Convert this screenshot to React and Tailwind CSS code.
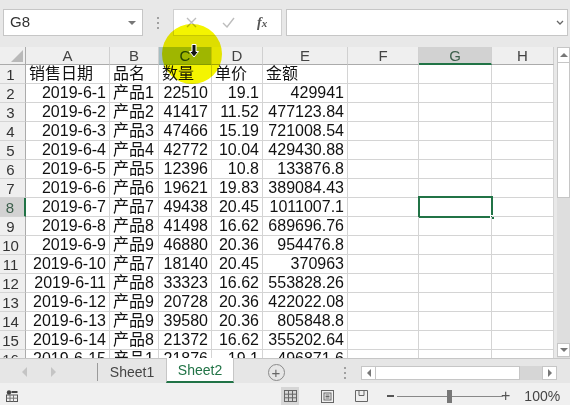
import React from 'react';

const FONT = { fontFamily: '"Liberation Sans", "Noto Sans CJK SC", sans-serif' };

// column widths in px, row header first
const cols = [
  { key: 'rh', w: 'w-[26px]' },
  { key: 'A', w: 'w-[84px]' },
  { key: 'B', w: 'w-[49px]' },
  { key: 'C', w: 'w-[53px]' },
  { key: 'D', w: 'w-[51px]' },
  { key: 'E', w: 'w-[85px]' },
  { key: 'F', w: 'w-[71px]' },
  { key: 'G', w: 'w-[73px]' },
  { key: 'H', w: 'w-[62px]' },
];

const rows = [
  ['销售日期', '品名', '数量', '单价', '金额'],
  ['2019-6-1', '产品1', '22510', '19.1', '429941'],
  ['2019-6-2', '产品2', '41417', '11.52', '477123.84'],
  ['2019-6-3', '产品3', '47466', '15.19', '721008.54'],
  ['2019-6-4', '产品4', '42772', '10.04', '429430.88'],
  ['2019-6-5', '产品5', '12396', '10.8', '133876.8'],
  ['2019-6-6', '产品6', '19621', '19.83', '389084.43'],
  ['2019-6-7', '产品7', '49438', '20.45', '1011007.1'],
  ['2019-6-8', '产品8', '41498', '16.62', '689696.76'],
  ['2019-6-9', '产品9', '46880', '20.36', '954476.8'],
  ['2019-6-10', '产品7', '18140', '20.45', '370963'],
  ['2019-6-11', '产品8', '33323', '16.62', '553828.26'],
  ['2019-6-12', '产品9', '20728', '20.36', '422022.08'],
  ['2019-6-13', '产品9', '39580', '20.36', '805848.8'],
  ['2019-6-14', '产品8', '21372', '16.62', '355202.64'],
  ['2019-6-15', '产品1', '21876', '19.1', '496871.6'],
];

const ColHeader = () => (
  <div className="flex h-[18px] shrink-0">
    {/* select-all corner */}
    <div className="w-[26px] h-full bg-[#efefef] border-r border-b border-[#ababab] relative">
      <div className="absolute right-[2px] bottom-[2px] w-0 h-0 border-l-[12px] border-l-transparent border-b-[12px] border-b-[#b9b9b9]" />
    </div>
    {cols.slice(1).map((c) => {
      let tone = 'bg-[#efefef] text-[#444] border-b border-[#ababab]';
      if (c.key === 'C') tone = 'bg-[#a6bec2] text-[#25466b] border-b border-[#8aa3a8]';
      if (c.key === 'G') tone = 'bg-[#d2d2d2] text-[#3d5f4c] border-b-2 border-b-[#217346]';
      return (
        <div
          key={c.key}
          className={`${c.w} h-full border-r border-r-[#d0d0d0] flex items-center justify-center text-[15px] leading-none ${tone}`}
        >
          {c.key}
        </div>
      );
    })}
  </div>
);

const DataRow = ({ n, data }) => {
  const head = n === 1;
  const selected = n === 8;
  return (
    <div className="flex h-[19px] shrink-0">
      <div
        className={`w-[26px] h-full flex items-center justify-center pr-[4px] text-[15px] leading-none border-b border-[#d4d4d4] ${
          selected ? 'bg-[#d2d2d2] text-[#3d5f4c] border-r-2 border-r-[#217346]' : 'bg-[#efefef] text-[#333] border-r border-r-[#ababab]'
        }`}
      >
        {n}
      </div>
      {cols.slice(1).map((c, i) => {
        const v = data[i] || '';
        const left = head || c.key === 'B';
        return (
          <div
            key={c.key}
            className={`${c.w} h-full relative border-r border-b border-[#d4d4d4] flex items-center px-[3px] text-[16px] leading-[18px] text-[#111] whitespace-nowrap ${
              left ? 'justify-start' : 'justify-end'
            }`}
          >
            {v}
            {selected && c.key === 'G' && (
              <div className="absolute -left-[1px] -top-[2px] w-[75px] h-[22px] border-2 border-[#217346]">
                <div className="absolute -right-[4px] -bottom-[4px] w-[5px] h-[5px] bg-[#217346] border border-white" />
              </div>
            )}
          </div>
        );
      })}
    </div>
  );
};

const VScroll = () => (
  <div className="w-[13px] h-full flex flex-col bg-[#dedede]">
    <div className="h-[16px] bg-white border border-[#c6c6c6] flex items-center justify-center">
      <div className="w-0 h-0 border-l-[4px] border-r-[4px] border-b-[4px] border-l-transparent border-r-transparent border-b-[#777]" />
    </div>
    <div className="h-[135px] bg-white border-x border-b border-[#c6c6c6]" />
    <div className="flex-1" />
    <div className="h-[14px] mb-[1px] bg-white border border-[#c6c6c6] flex items-center justify-center">
      <div className="w-0 h-0 border-l-[4px] border-r-[4px] border-t-[4px] border-l-transparent border-r-transparent border-t-[#777]" />
    </div>
  </div>
);

const Dots = ({ className }) => (
  <div className={`flex flex-col gap-[3px] ${className}`}>
    <div className="w-[2px] h-[2px] bg-[#a0a0a0]" />
    <div className="w-[2px] h-[2px] bg-[#a0a0a0]" />
    <div className="w-[2px] h-[2px] bg-[#a0a0a0]" />
  </div>
);

const TabBar = () => (
  <div className="h-[25px] shrink-0 flex items-stretch bg-[#e6e6e6] border-t border-[#c6c6c6] text-[14px]">
    <div className="w-[97px] flex items-center pt-[2px]">
      <div className="ml-[22px] w-0 h-0 border-t-[5px] border-b-[5px] border-r-[5px] border-t-transparent border-b-transparent border-r-[#c4c4c4]" />
      <div className="ml-[24px] w-0 h-0 border-t-[5px] border-b-[5px] border-l-[5px] border-t-transparent border-b-transparent border-l-[#c4c4c4]" />
    </div>
    <div className="w-px bg-[#9a9a9a] mt-[4px] mb-[2px]" />
    <div className="w-[68px] flex items-center justify-center text-[#444] pt-[2px]">Sheet1</div>
    <div className="w-[68px] -mt-px flex items-center justify-center bg-white text-[#217346] border-x border-[#c6c6c6] border-b-2 border-b-[#217346] pt-[2px]">
      Sheet2
    </div>
    <div className="w-[84px] flex items-center justify-center pt-[3px]">
      <div className="w-[17px] h-[17px] rounded-full border border-[#8a8a8a] flex items-center justify-center text-[#666] text-[15px] leading-none">
        +
      </div>
    </div>
    <div className="w-[43px] flex items-center pl-[26px] pt-[3px]">
      <Dots />
    </div>
    <div className="w-[196px] flex items-center pt-[3px]">
      <div className="h-[14px] w-full flex bg-[#d6d6d6]">
        <div className="w-[15px] bg-white border border-[#c6c6c6] flex items-center justify-center">
          <div className="w-0 h-0 border-t-[4px] border-b-[4px] border-r-[4px] border-t-transparent border-b-transparent border-r-[#777]" />
        </div>
        <div className="w-[144px] bg-white border-y border-r border-[#c6c6c6]" />
        <div className="flex-1" />
        <div className="w-[15px] bg-white border border-[#c6c6c6] flex items-center justify-center">
          <div className="w-0 h-0 border-t-[4px] border-b-[4px] border-l-[4px] border-t-transparent border-b-transparent border-l-[#777]" />
        </div>
      </div>
    </div>
  </div>
);

const StatusBar = () => (
  <div className="h-[22px] shrink-0 flex items-center pt-[4px] bg-[#f0f0f0] text-[#444]">
    <svg className="ml-[6px]" width="12" height="12" viewBox="0 0 12 12">
      <circle cx="3" cy="2.5" r="2.2" fill="#444" />
      <rect x="5.5" y="1" width="6" height="2" fill="#444" />
      <rect x="0.5" y="5" width="11" height="6.5" fill="none" stroke="#555" />
      <path d="M4 5v6.5M7.5 5v6.5M0.5 8.2h11" stroke="#777" />
    </svg>
    <div className="ml-[263px] w-[18px] h-[18px] bg-[#d6d6d6] flex items-center justify-center">
      <svg width="13" height="12" viewBox="0 0 13 12">
        <rect x="0.5" y="0.5" width="12" height="11" fill="none" stroke="#666" />
        <path d="M4.5 0.5v11M8.5 0.5v11M0.5 4.2h12M0.5 7.8h12" stroke="#666" />
      </svg>
    </div>
    <svg className="ml-[22px]" width="13" height="13" viewBox="0 0 13 13">
      <rect x="0.5" y="0.5" width="12" height="12" fill="none" stroke="#666" />
      <rect x="3" y="3" width="7" height="7" fill="none" stroke="#666" />
      <path d="M4.5 5h4M4.5 6.5h4M4.5 8h4" stroke="#666" />
    </svg>
    <svg className="ml-[21px]" width="13" height="12" viewBox="0 0 13 12">
      <path d="M0.5 0.5h12v11h-12zM4 0.5v5h5v-5" fill="none" stroke="#666" />
    </svg>
    <div className="ml-[19px] w-[7px] h-[2px] bg-[#555]" />
    <div className="ml-[3px] w-[106px] h-px bg-[#888] relative">
      <div className="absolute left-[50px] -top-[6px] w-[5px] h-[13px] bg-[#777]" />
    </div>
    <div className="text-[16px] leading-none text-[#555] -ml-[2px]">+</div>
    <div className="ml-[14px] text-[14px]" style={FONT}>100%</div>
  </div>
);

export default function App() {
  return (
    <div className="w-[570px] h-[405px] overflow-hidden relative flex flex-col bg-[#e8e8e8]" style={FONT}>
      {/* name box + formula bar */}
      <div className="h-[47px] shrink-0 flex items-start pt-[9px] pl-[3px]">
        <div className="w-[140px] h-[27px] bg-white border border-[#c6c6c6] flex items-center justify-between pl-[6px] pr-[6px] text-[15px] text-[#333]">
          <span>G8</span>
          <div className="w-0 h-0 border-l-[4px] border-r-[4px] border-t-[4px] border-l-transparent border-r-transparent border-t-[#777]" />
        </div>
        <div className="w-[30px] h-[27px] flex items-center justify-center">
          <Dots />
        </div>
        <div className="w-[109px] h-[27px] bg-white border border-[#d0d0d0] flex items-center text-[#c0c0c0]">
          <svg className="ml-[12px]" width="11" height="11" viewBox="0 0 11 11">
            <path d="M1 1l9 9M10 1l-9 9" stroke="#bdbdbd" strokeWidth="1.4" />
          </svg>
          <svg className="ml-[25px]" width="13" height="11" viewBox="0 0 13 11">
            <path d="M1 6l4 4 7-9" fill="none" stroke="#bdbdbd" strokeWidth="1.4" />
          </svg>
          <span className="ml-[22px] text-[14px] italic font-bold text-[#555]" style={{ fontFamily: '"Liberation Serif", serif' }}>
            f<span className="text-[11px]">x</span>
          </span>
        </div>
        <div className="ml-[4px] w-[282px] h-[27px] bg-white border border-[#c6c6c6] flex items-center justify-end pr-[3px]">
          <svg width="8" height="6" viewBox="0 0 8 6">
            <path d="M1 1l3 3 3-3" fill="none" stroke="#666" strokeWidth="1.3" />
          </svg>
        </div>
      </div>

      {/* sheet grid + vertical scroll */}
      <div className="h-[311px] shrink-0 flex bg-[#e8e8e8]">
        <div className="w-[554px] h-full flex flex-col overflow-hidden bg-white">
          <ColHeader />
          {rows.map((r, i) => (
            <DataRow key={i} n={i + 1} data={r} />
          ))}
        </div>
        <div className="w-[3px]" />
        <VScroll />
      </div>

      <TabBar />
      <StatusBar />

      {/* recording cursor highlight */}
      <div className="absolute left-[162px] top-[24px] w-[60px] h-[60px] rounded-full bg-[#f4f400] mix-blend-multiply pointer-events-none" />
      <svg className="absolute left-[189px] top-[44px] pointer-events-none" width="10" height="14" viewBox="0 0 10 14">
        <path d="M3 0.5h4v7h2.5L5 13 0.5 7.5H3z" fill="#111" stroke="#fff" strokeWidth="1" />
      </svg>
    </div>
  );
}
